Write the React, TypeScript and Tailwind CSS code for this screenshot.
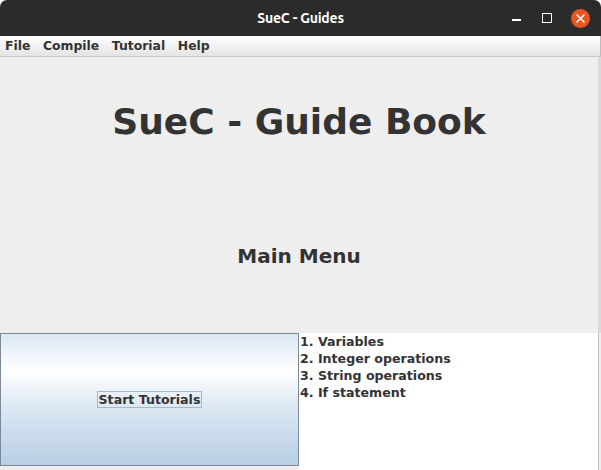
export default function App() {
  const items = ['1. Variables', '2. Integer operations', '3. String operations', '4. If statement']

  return (
    <div className="w-[601px] h-[470px] flex flex-col bg-white overflow-hidden font-['DejaVu_Sans',sans-serif]">
      {/* title bar */}
      <div className="h-[36px] shrink-0 bg-[#2b2b2b] rounded-t-[7px] relative flex items-center justify-center">
        <span className="text-white text-[14px] font-bold font-['Ubuntu','DejaVu_Sans_Condensed','DejaVu_Sans',sans-serif] tracking-[-0.2px]">
          SueC - Guides
        </span>
        <div className="absolute right-[11px] top-0 h-[36px] flex items-center">
          <div className="w-[9px] h-[2px] bg-white mt-[4px] mr-[21px]" />
          <div className="w-[10px] h-[10px] border-[1.5px] border-white mr-[19px]" />
          <div className="w-[19px] h-[19px] rounded-full bg-[#e95420] flex items-center justify-center">
            <svg width="9" height="9" viewBox="0 0 9 9">
              <path d="M1 1 L8 8 M8 1 L1 8" stroke="white" strokeWidth="1.6" strokeLinecap="round" />
            </svg>
          </div>
        </div>
      </div>

      {/* menu bar */}
      <div className="h-[20px] shrink-0 flex items-center gap-[12.6px] px-[5px] bg-gradient-to-b from-white to-[#e4e4e4] text-[12.4px] font-bold text-[#333333] border-r border-[#bdbdbd]">
        <span>File</span>
        <span>Compile</span>
        <span>Tutorial</span>
        <span>Help</span>
      </div>
      <div className="h-[1px] shrink-0 bg-[#c9c9c9]" />

      {/* main panel */}
      <div className="flex-1 bg-[#eeeeee] flex flex-col items-center border-r-[3px] border-[#dadada]">
        <div className="mt-[47px] text-[36px] leading-none font-bold text-[#333333]">SueC - Guide Book</div>
        <div className="mt-[106px] text-[20px] leading-none font-bold text-[#333333]">Main Menu</div>
      </div>

      {/* bottom row */}
      <div className="h-[137px] shrink-0 flex bg-[#eeeeee]">
        <div className="w-[299px] h-[133px] border border-[#7a8a99] bg-[linear-gradient(to_bottom,#dce7f3_0%,#ffffff_28%,#dde8f3_55%,#b8cfe5_100%)] flex items-center justify-center">
          <span className="border border-[#a3b8cc] px-[1px] text-[12.6px] leading-[15px] font-bold text-[#333333]">
            Start Tutorials
          </span>
        </div>
        <div className="w-[299px] bg-white pl-[1px] flex flex-col text-[12.6px] leading-[17px] font-bold text-[#333333]">
          {items.map((t) => (
            <div key={t}>{t}</div>
          ))}
        </div>
        <div className="flex-1 border-l border-[#c0c0c0] bg-[#eeeeee]" />
      </div>
    </div>
  )
}
